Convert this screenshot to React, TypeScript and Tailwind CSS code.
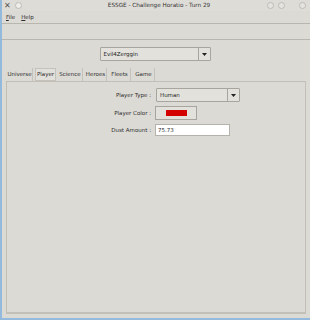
import React from "react"

function Caret() {
  return (
    <svg width="5" height="3" viewBox="0 0 5 3">
      <path d="M0 0h5L2.5 3z" fill="#222" />
    </svg>
  )
}

function Combo({ value, width }: { value: string; width: string }) {
  return (
    <div className={`flex h-[14px] ${width} border border-[#a8a59e] bg-[#e3e1dc] rounded-[1px]`}>
      <div className="flex-1 flex items-center pl-[3px] text-[#222]">{value}</div>
      <div className="w-[12px] border-l border-[#a8a59e] flex items-center justify-center">
        <Caret />
      </div>
    </div>
  )
}

const tabs = [
  { name: "Universe", w: "w-[26px]" },
  { name: "Player", w: "w-[21px]" },
  { name: "Science", w: "w-[25px]" },
  { name: "Heroes", w: "w-[22px]" },
  { name: "Fleets", w: "w-[22px]" },
  { name: "Game", w: "w-[22px]" },
]

export default function App() {
  return (
    <div
      className="w-[310px] h-[320px] bg-[#dcdad5] flex flex-col text-[5.5px] text-[#2e2e2e] border-l-2 border-b-2 border-[#93b9dc] overflow-hidden"
      style={{ fontFamily: "'DejaVu Sans', sans-serif" }}
    >
      {/* Title bar */}
      <div className="h-[11px] grid grid-cols-[1fr_auto_1fr] items-center px-[2px] bg-[#dedcd7]">
        <div className="flex items-center gap-[4px]">
          <span className="text-[8px] leading-none text-[#555]">✕</span>
          <span className="w-[7px] h-[7px] rounded-full bg-[#eeedea] border border-[#bdbbb6]" />
        </div>
        <div className="text-center text-[5.7px] text-[#333] pl-[6px]">ESSGE - Challenge Horatio - Turn 29</div>
        <div className="flex items-center justify-end">
          <span className="w-[7px] h-[7px] rounded-full bg-[#e6e4e0] border border-[#bdbbb6] mr-[4px]" />
          <span className="w-[7px] h-[7px] rounded-full bg-[#e6e4e0] border border-[#bdbbb6] mr-[14px]" />
          <span className="w-[7px] h-[7px] rounded-full bg-[#e6e4e0] border border-[#bdbbb6] mr-[2px]" />
        </div>
      </div>

      {/* Menu bar */}
      <div className="h-[13px] flex items-center gap-[6px] px-[4px] border-b border-[#b9b6b0]">
        <span>
          <u>F</u>ile
        </span>
        <span>
          <u>H</u>elp
        </span>
      </div>

      {/* Toolbar */}
      <div className="h-[16px] border-b border-[#b9b6b0]" />

      {/* Player select */}
      <div className="flex justify-center pt-[7px] pr-[2px]">
        <Combo value="Evil4Zerggin" width="w-[111px]" />
      </div>

      {/* Tabs */}
      <div className="flex mt-[7px] ml-[5px] gap-[2px]">
        {tabs.map((t) => (
          <div
            key={t.name}
            className={`h-[13px] ${t.w} flex items-center justify-center border-r border-[#c5c2bc] whitespace-nowrap ${
              t.name === "Player" ? "border border-[#8e8b85] bg-[#e2e0db]" : ""
            }`}
          >
            {t.name}
          </div>
        ))}
      </div>

      {/* Panel */}
      <div className="flex-1 mx-[4px] mb-[4px] border border-[#c2bfb8] border-b-2 border-b-[#c2bfb8] flex flex-col pt-[6px]">
        <div className="grid grid-cols-[148px_1fr] gap-y-[4px] items-center">
          <div className="text-right pr-[4px]">Player Type :</div>
          <div className="pl-[1px]">
            <Combo value="Human" width="w-[84px]" />
          </div>
          <div className="text-right pr-[4px]">Player Color :</div>
          <div className="h-[14px] w-[42px] border border-[#a8a59e] bg-[#e3e1dc] flex items-center justify-center">
            <div className="w-[21px] h-[6px] bg-[#d40000]" />
          </div>
          <div className="text-right pr-[4px]">Dust Amount :</div>
          <div className="h-[12px] w-[75px] bg-white border border-[#b5b2ab] flex items-center pl-[2px]">
            75.73
          </div>
        </div>
      </div>
    </div>
  )
}
